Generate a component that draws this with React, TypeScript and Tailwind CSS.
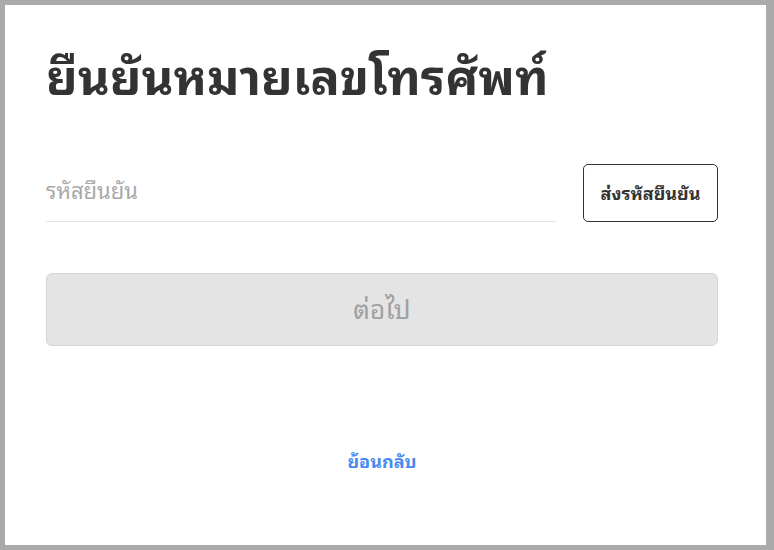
import { useState } from "react";

export default function App() {
  const [code, setCode] = useState("");
  const ready = code.trim().length > 0;

  return (
    <div className="h-[550px] w-[774px] bg-[#aaaaaa] pt-[5px] pl-[5px] font-['Noto_Sans_Thai_Looped','Noto_Sans',sans-serif]">
      <div className="flex h-[540px] w-[761px] flex-col bg-white pl-[41px] pr-[48px]">
        <h1 className="mt-[34px] text-[49px] font-bold leading-[68px] text-[#333333]">
          ยืนยันหมายเลขโทรศัพท์
        </h1>

        <div className="mt-[57px] flex items-end gap-[27px]">
          <input
            value={code}
            onChange={(e) => setCode(e.target.value)}
            placeholder="รหัสยืนยัน"
            className="h-[57px] flex-1 border-b border-[#e2e2e2] pb-[9px] text-[22px] text-[#333] outline-none placeholder:text-[#a9a9a9]"
          />
          <button className="h-[58px] w-[135px] rounded-[5px] border border-[#333333] pb-[2px] text-[18px] font-bold text-[#333333]">
            ส่งรหัสยืนยัน
          </button>
        </div>

        <button
          disabled={!ready}
          className="mt-[51px] h-[73px] w-full rounded-[6px] border border-[#d6d6d6] bg-[#e4e4e4] pb-[4px] text-[26px] text-[#a0a0a0]"
        >
          ต่อไป
        </button>

        <a href="#" className="mt-[101px] self-center text-[18px] font-bold text-[#4a8af0]">
          ย้อนกลับ
        </a>
      </div>
    </div>
  );
}
